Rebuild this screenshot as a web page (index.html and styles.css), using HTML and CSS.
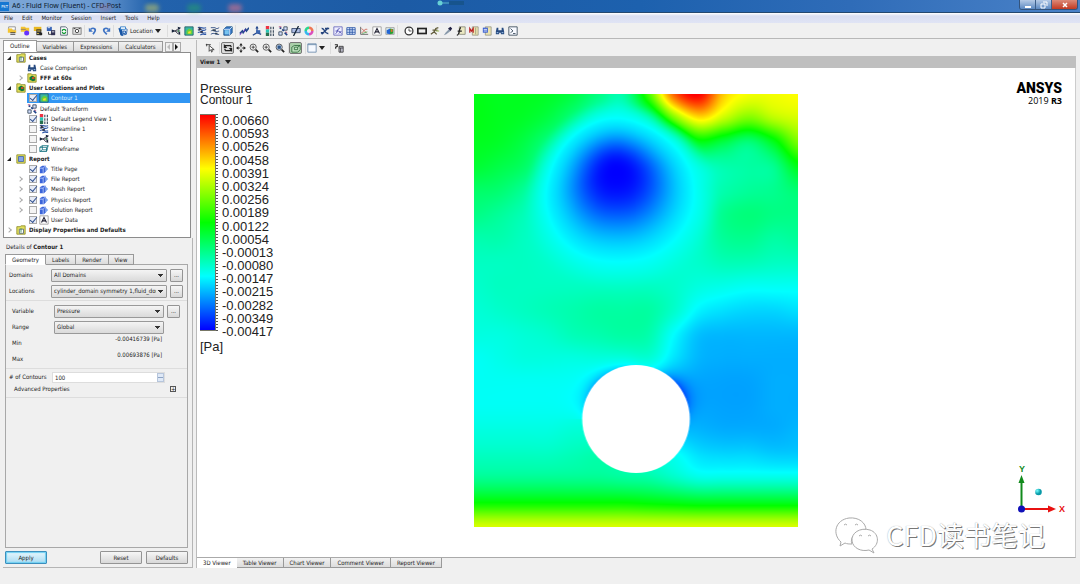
FILE: index.html
```html
<!DOCTYPE html>
<html lang="en">
<head>
<meta charset="utf-8">
<title>A6 : Fluid Flow (Fluent) - CFD-Post</title>
<link rel="stylesheet" href="styles.css">
</head>
<body>
<svg class="defs" aria-hidden="true">
  <defs>
    <symbol id="load" viewBox="0 0 12 12"><path d="M2 1h8v4H2z" fill="#fff" stroke="#888"/><path d="M1 3h5l1 2h4v3H1z" fill="#f4c430"/><path d="M4 8h6M4 10h6" stroke="#333"/></symbol>
    <symbol id="loadr" viewBox="0 0 12 12"><path d="M1 1h5l1 1h4v5H1z" fill="#f4c430"/><path d="M1 4h6" stroke="#876"/><circle cx="8" cy="8.500" r="3" fill="#63f"/></symbol>
    <symbol id="save" viewBox="0 0 12 12"><path d="M1 1h9v5H1z" fill="#e9b820"/><path d="M4 4h6v7H4z" fill="#333"/><path d="M5 6h4M5 9h2" stroke="#fd5"/><path d="M8 8h3v3H8z" fill="#222"/></symbol>
    <symbol id="savep" viewBox="0 0 12 12"><path d="M1 1h6v5H1z" fill="#3763b5"/><path d="M2 2h3" stroke="#fff"/><path d="M6 5h5v6H6z" fill="#335"/><path d="M3 7v3h3" stroke="#333" fill="none"/><path d="M7 7h3" stroke="#fff"/></symbol>
    <symbol id="refresh" viewBox="0 0 12 12"><path d="M2 1h6l2 2v8H2z" fill="#fff" stroke="#456"/><path d="M4 6a2 2 0 0 1 4 0M8 7a2 2 0 0 1-4 0" stroke="#193" stroke-width="1.500" fill="none"/></symbol>
    <symbol id="camera" viewBox="0 0 12 12"><path d="M1 2h10v8H1z" fill="#ddd" stroke="#777"/><circle cx="6" cy="6" r="2" fill="#fff" stroke="#333"/><path d="M2 3h2M8 3h2" stroke="#333"/></symbol>
    <symbol id="undo" viewBox="0 0 12 12"><path d="M3 4c4-3 7 0 5 3L6 10" fill="none" stroke="#3f73c4" stroke-width="2"/><path d="M1 2v5h5z" fill="#3f73c4"/></symbol>
    <symbol id="redo" viewBox="0 0 12 12"><path d="M9 4C5 1 2 4 4 7l3 3" fill="none" stroke="#3f73c4" stroke-width="2"/><path d="M11 2v5H6z" fill="#3f73c4"/></symbol>
    <symbol id="location" viewBox="0 0 12 12"><path d="M1 3l3 8 6-1 1-6-4-2z" fill="#fff" stroke="#1856a5"/><path d="M1 3l2 8 3 1-1-8z" fill="#1856a5"/><path d="M3 1h6v3H3z" fill="#fff" stroke="#2878c8"/><path d="M6 6h3v3H6z" fill="#bcd8f4" stroke="#1856a5"/></symbol>
    <symbol id="vector" viewBox="0 0 12 12"><path d="M1 6h4l4-3M5 6l4 4M5 6h6" stroke="#223" fill="none"/><path d="M1 4v4l4-2zM8 1l4 1-3 3zM8 8l3 3 0-4z" fill="#17233a"/><circle cx="9" cy="6" r="1" fill="#284"/></symbol>
    <symbol id="contour" viewBox="0 0 12 12"><path d="M1 1h10v10H1z" fill="#38b5a4" stroke="#235b65"/><path d="M3 10V6l3-3 4 2v5z" fill="#67d03b"/><path d="M5 9V7l3-1v3z" fill="#f7dc35"/></symbol>
    <symbol id="stream" viewBox="0 0 12 12"><path d="M1 2c3-2 4 2 10 0M1 5c4-3 5 3 10-1M1 8c4-3 6 2 10 0M4 11c3-3 4 0 7-1" stroke="#315aa8" stroke-width="1.300" fill="none"/><path d="M2 1l4 3-4 2zM4 6h3v2H4z" fill="#334"/></symbol>
    <symbol id="particle" viewBox="0 0 12 12"><path d="M1 2h5c2 2 3 1 5 0M1 6c3-2 4 2 10 0M1 10c4-3 6 1 10 0" stroke="#24437c" fill="none"/><path d="M3 4h4v2H3zM6 8h3v2H6z" fill="#345"/></symbol>
    <symbol id="cube" viewBox="0 0 12 12"><path d="M1 4l3-3h7v7l-3 3H1z" fill="#3a78c9" stroke="#175083"/><path d="M1 4h7v7M8 4l3-3" fill="none" stroke="#dcf0ff"/><path d="M2 5h5v5H2z" fill="#78c4ef"/></symbol>
    <symbol id="chart1" viewBox="0 0 12 12"><path d="M1 9l3-3 1 2 3-4 1 2 3-4" stroke="#24478c" stroke-width="2" fill="none"/><path d="M1 11l2-3M6 7l1-3" stroke="#73c"/></symbol>
    <symbol id="chart2" viewBox="0 0 12 12"><path d="M6 1v7L1 11M6 8l5 2" stroke="#24478c" stroke-width="1.500" fill="none"/><path d="M5 5h5v4H5z" fill="#3a66b0"/><path d="M6 0l2 3H4z" fill="#24478c"/></symbol>
    <symbol id="legend" viewBox="0 0 12 12"><path d="M1 0h4v4H1z" fill="#e34"/><path d="M1 4h4v4H1z" fill="#26c6b5"/><path d="M1 8h4v4H1z" fill="#287050"/><path d="M7 1v3M7 5v3M7 9v3M10 1v3M10 5v3M10 9v3" stroke="#345" stroke-width="1.300"/></symbol>
    <symbol id="transform" viewBox="0 0 12 12"><path d="M1 7h4v4H1zM7 1h4v4H7z" fill="#d4e0ff" stroke="#345"/><path d="M2 2l2 1M5 4l2 2M8 8l3 3" stroke="#248" stroke-width="2"/><path d="M1 1h3M9 7l2 1" stroke="#a36"/></symbol>
    <symbol id="clip" viewBox="0 0 12 12"><path d="M1 3h10v5H1z" fill="#aebde4" stroke="#346"/><path d="M9 0L3 12" stroke="#123" stroke-width="1.500"/></symbol>
    <symbol id="wheel" viewBox="0 0 12 12"><g fill="none" stroke-width="3"><path d="M6 2a4 4 0 0 1 4 4" stroke="#e75"/><path d="M10 6a4 4 0 0 1-4 4" stroke="#db4fbd"/><path d="M6 10a4 4 0 0 1-4-4" stroke="#37b6ef"/><path d="M2 6a4 4 0 0 1 4-4" stroke="#2bd68f"/></g></symbol>
    <symbol id="var" viewBox="0 0 12 12"><path d="M2 3c4-1 3 7 8 6M10 2L2 10M6 3h5M1 8h4" stroke="#24437c" stroke-width="1.700" fill="none"/></symbol>
    <symbol id="expr" viewBox="0 0 12 12"><path d="M1 1h10v10H1z" fill="#eef" stroke="#66b"/><path d="M3 9c3 0 1-6 5-6M3 6h4M7 6l3 3M10 6L7 9" stroke="#44a" fill="none"/></symbol>
    <symbol id="table" viewBox="0 0 12 12"><path d="M1 2h10v8H1zM1 4.500h10M1 7.500h10M4.500 2v8M7.500 2v8" fill="#dceaff" stroke="#2953a5"/></symbol>
    <symbol id="chart" viewBox="0 0 12 12"><path d="M2 1v9h9" stroke="#555" fill="none"/><path d="M3 3l6 5M3 8c3 0 2-5 7-4" stroke="#c65" fill="none"/><path d="M4 9l6-2" stroke="#5a5"/></symbol>
    <symbol id="text" viewBox="0 0 12 12"><path d="M1 1h10v10H1z" fill="#fff" stroke="#999"/><path d="M3 9l3-6 3 6M4 7h4" stroke="#223" fill="none" stroke-width="1.300"/></symbol>
    <symbol id="figure" viewBox="0 0 12 12"><path d="M1 2h10v8H1z" fill="#dee" stroke="#999"/><path d="M2 5l4-2v7L2 9z" fill="#2365d4"/><path d="M6 3l4 1v5L6 10z" fill="#2ba032"/><path d="M7 4h2v3H7z" fill="#e63"/></symbol>
    <symbol id="clock" viewBox="0 0 12 12"><circle cx="6" cy="6" r="4.700" fill="#fff" stroke="#333" stroke-width="1.500"/><path d="M6 3v3h3" fill="none" stroke="#333"/></symbol>
    <symbol id="film" viewBox="0 0 12 12"><path d="M0 2h12v8H0z" fill="#222"/><path d="M2 4h8v4H2z" fill="#eee"/></symbol>
    <symbol id="runner" viewBox="0 0 12 12"><path d="M1 10l4-3 2-4 3-1M5 7l3 3M3 5h6" stroke="#5f5a38" stroke-width="1.500" fill="none"/><path d="M7 6h4" stroke="#8a3"/></symbol>
    <symbol id="probe" viewBox="0 0 12 12"><path d="M1 11l2-3 4-4 2 2-5 4z" fill="#89a"/><path d="M6 3l3 3 2-3-2-2z" fill="#224"/></symbol>
    <symbol id="func" viewBox="0 0 12 12"><path d="M4 1h7v9H4z" fill="#ece9c2" stroke="#887"/><path d="M1 11c4 0 2-9 5-9M2 6h5" stroke="#222" fill="none" stroke-width="1.500"/></symbol>
    <symbol id="macro" viewBox="0 0 12 12"><path d="M4 1h7v10H4z" fill="#ece4b0" stroke="#998"/><path d="M1 8V3l2 3 2-3v5" stroke="#b22" stroke-width="1.500" fill="none"/><path d="M8 2v8" stroke="#997"/></symbol>
    <symbol id="turbo" viewBox="0 0 12 12"><path d="M4 1h7v10H4z" fill="#ece4b0" stroke="#998"/><path d="M1 2h6v6H1z" fill="#345bd0"/><path d="M2 4h4M2 6h4" stroke="#fff"/></symbol>
    <symbol id="binoc" viewBox="0 0 12 12"><path d="M2 2h2v3h4V2h2l1 5v3H7V8H5v2H1V7z" fill="#274b80"/><path d="M2 8h2M8 8h2" stroke="#bcdcff"/></symbol>
    <symbol id="cmd" viewBox="0 0 12 12"><path d="M1 1h10v10H1z" fill="#f8faff" stroke="#345"/><path d="M3 3l3 3-3 2M6 9h3" fill="none" stroke="#345"/></symbol>
    <symbol id="select" viewBox="0 0 12 12"><path d="M1 2h6M2 1v3" stroke="#333"/><path d="M5 3v7l2-2 1 3 1-1-1-2h3z" fill="#fff" stroke="#333"/></symbol>
    <symbol id="rotate" viewBox="0 0 12 12"><path d="M2 3h7l1 2M10 9H3L2 7" fill="none" stroke="#222" stroke-width="1.500"/><path d="M1 1v5h4zM11 11V6H7z" fill="#222"/></symbol>
    <symbol id="move" viewBox="0 0 12 12"><path d="M6 2v8M2 6h8" stroke="#333" stroke-dasharray="3 2"/><path d="M6 0l2 3H4zM6 12l2-3H4zM0 6l3-2v4zM12 6L9 4v4z" fill="#222"/></symbol>
    <symbol id="zoom" viewBox="0 0 12 12"><circle cx="5" cy="5" r="3.700" fill="#f6f6f6" stroke="#444"/><path d="M8 8l3 3" stroke="#222" stroke-width="2"/><path d="M5 3v4M3 5h4" stroke="#333"/></symbol>
    <symbol id="zoomfit" viewBox="0 0 12 12"><circle cx="5" cy="5" r="3.700" fill="#cfe0f6" stroke="#444"/><path d="M8 8l3 3" stroke="#222" stroke-width="2"/><path d="M3 3h4v4H3z" fill="#2e5688"/></symbol>
    <symbol id="highlight" viewBox="0 0 12 12"><path d="M1 5l3-2h7v5l-3 3H1z" fill="#bfe2bf" stroke="#2d6a38"/><path d="M4 5h4v3H4zM8 5l3-2" stroke="#2d6a38" fill="none"/></symbol>
    <symbol id="pane" viewBox="0 0 12 12"><path d="M1 1h10v10H1z" fill="#f5f9ff" stroke="#68a"/><path d="M1 2h10" stroke="#68a"/></symbol>
    <symbol id="help" viewBox="0 0 12 12"><path d="M1 2h3v2L2 5v2" stroke="#222" fill="none" stroke-width="1.300"/><path d="M6 4h5v7H6z" fill="#ccd" stroke="#333"/><path d="M6 6h5M8 6v5" stroke="#333"/></symbol>
    <symbol id="folder" viewBox="0 0 12 12"><path d="M1 2h4l1-1h5v10H1z" fill="#e3e05c" stroke="#8d8c27"/><path d="M4 5h5v5H4z" fill="#fff" stroke="#567"/><path d="M6 4v5" stroke="#385"/></symbol>
    <symbol id="foldplot" viewBox="0 0 12 12"><path d="M1 1h4l1 1h5v9H1z" fill="#e3e05c" stroke="#8d8c27"/><path d="M3 5l3-2 4 2v4l-3 1-4-2z" fill="#13763b"/><path d="M6 5h3v2H6z" fill="#e64820"/></symbol>
    <symbol id="foldrep" viewBox="0 0 12 12"><path d="M1 1h10v10H1z" fill="#e3e05c" stroke="#8d8c27"/><path d="M3 3h6v6H3z" fill="#86a4e8" stroke="#456aa8"/></symbol>
    <symbol id="page" viewBox="0 0 12 12"><path d="M1 4l3-2h4v7l-2 2H1z" fill="#3c65d8"/><path d="M1 5h4v6M5 5l3-3" stroke="#b9ceff" fill="none"/><path d="M8 3l3 3-3 3z" fill="#79a3ed"/></symbol>
    <symbol id="wire" viewBox="0 0 12 12"><path d="M1 4l3-2h7l-2 7H1zM1 4h8l2-2M9 4v5M4 2v5h6M4 7L1 9" fill="none" stroke="#167482"/></symbol>
  </defs>
</svg>

<header class="titlebar">
  <span class="app-badge">PST</span>
  <h1 class="app-title">A6 : Fluid Flow (Fluent) - CFD-Post</h1>
  <span class="glow glow-red"></span><span class="glow glow-yellow"></span><span class="glow glow-green"></span><span class="glow glow-pink"></span>
  <svg class="recorder" viewBox="0 0 28 6"><path d="M3 3h10" stroke="#5ab6ca" stroke-width="1"/><circle cx="3" cy="3" r="2.500" fill="#67d0d5"/><path d="M12 1h15v4H12z" fill="#17548d"/></svg>
  <div class="window-buttons">
    <button class="win" aria-label="Minimize"><svg viewBox="0 0 10 8"><path d="M2 5h6v2H2z" fill="#fff"/></svg></button>
    <button class="win" aria-label="Restore"><svg viewBox="0 0 10 8"><path d="M4 1h4v4M2 3h4v4H2z" fill="none" stroke="#fff"/></svg></button>
    <button class="win close" aria-label="Close"><svg viewBox="0 0 10 8"><path d="M3 2l4 4M7 2L3 6" stroke="#fff" stroke-width="1.500"/></svg></button>
  </div>
</header>

<nav class="menubar">
  <button>File</button><button>Edit</button><button>Monitor</button><button>Session</button><button>Insert</button><button>Tools</button><button>Help</button>
</nav>

<div class="toolbar main-tools">
  <div class="group">
    <button aria-label="Load results"><svg><use href="#load"/></svg></button><button aria-label="Load state"><svg><use href="#loadr"/></svg></button><button aria-label="Save state"><svg><use href="#save"/></svg></button><button aria-label="Save project"><svg><use href="#savep"/></svg></button><button aria-label="Refresh"><svg><use href="#refresh"/></svg></button><button aria-label="Save picture"><svg><use href="#camera"/></svg></button>
  </div>
  <div class="group">
    <button aria-label="Undo"><svg><use href="#undo"/></svg></button><button aria-label="Redo"><svg><use href="#redo"/></svg></button>
  </div>
  <div class="group wide">
    <button class="labelled"><svg><use href="#location"/></svg>Location<span class="caret"></span></button>
  </div>
  <div class="group">
    <button aria-label="Vector"><svg><use href="#vector"/></svg></button><button aria-label="Contour"><svg><use href="#contour"/></svg></button><button aria-label="Streamline"><svg><use href="#stream"/></svg></button><button aria-label="Particle track"><svg><use href="#particle"/></svg></button><button aria-label="Volume rendering"><svg><use href="#cube"/></svg></button>
  </div>
  <div class="group">
    <button aria-label="Text"><svg><use href="#chart1"/></svg></button><button aria-label="Coordinate frame"><svg><use href="#chart2"/></svg></button><button aria-label="Legend"><svg><use href="#legend"/></svg></button><button aria-label="Instance transform"><svg><use href="#transform"/></svg></button><button aria-label="Clip plane"><svg><use href="#clip"/></svg></button><button aria-label="Color map"><svg><use href="#wheel"/></svg></button>
  </div>
  <div class="group">
    <button aria-label="Variable"><svg><use href="#var"/></svg></button><button aria-label="Expression"><svg><use href="#expr"/></svg></button><button aria-label="Table"><svg><use href="#table"/></svg></button><button aria-label="Chart"><svg><use href="#chart"/></svg></button><button aria-label="Comment"><svg><use href="#text"/></svg></button><button aria-label="Figure"><svg><use href="#figure"/></svg></button>
  </div>
  <div class="group wide">
    <button aria-label="Timestep selector"><svg><use href="#clock"/></svg></button><button aria-label="Animation"><svg><use href="#film"/></svg></button><button aria-label="Quick editor"><svg><use href="#runner"/></svg></button><button aria-label="Probe"><svg><use href="#probe"/></svg></button><button aria-label="Function calculator"><svg><use href="#func"/></svg></button><button aria-label="Macro calculator"><svg><use href="#macro"/></svg></button><button aria-label="Mesh calculator"><svg><use href="#turbo"/></svg></button><button aria-label="Case comparison"><svg><use href="#binoc"/></svg></button><button aria-label="Command editor"><svg><use href="#cmd"/></svg></button>
  </div>
</div>

<main class="workspace">
  <aside class="side">
    <div class="tabs outline-tabs">
      <button class="tab on">Outline</button><button class="tab">Variables</button><button class="tab">Expressions</button><button class="tab">Calculators</button>
      <div class="scrollers"><button aria-label="Previous tabs"><span class="left"></span></button><button aria-label="Next tabs"><span class="right"></span></button></div>
    </div>
    <ul class="tree">
      <li class="root"><span class="open"></span><svg><use href="#folder"/></svg>Cases</li>
      <li class="leaf"><svg><use href="#binoc"/></svg>Case Comparison</li>
      <li class="leaf strong"><span class="shut"></span><svg><use href="#foldplot"/></svg>FFF at 60s</li>
      <li class="root"><span class="open"></span><svg><use href="#foldplot"/></svg>User Locations and Plots</li>
      <li class="leaf selected"><label><input type="checkbox" checked><svg><use href="#contour"/></svg>Contour 1</label></li>
      <li class="leaf"><svg><use href="#transform"/></svg>Default Transform</li>
      <li class="leaf"><label><input type="checkbox" checked><svg><use href="#legend"/></svg>Default Legend View 1</label></li>
      <li class="leaf"><label><input type="checkbox"><svg><use href="#stream"/></svg>Streamline 1</label></li>
      <li class="leaf"><label><input type="checkbox"><svg><use href="#vector"/></svg>Vector 1</label></li>
      <li class="leaf"><label><input type="checkbox"><svg><use href="#wire"/></svg>Wireframe</label></li>
      <li class="root"><span class="open"></span><svg><use href="#foldrep"/></svg>Report</li>
      <li class="leaf"><label><input type="checkbox" checked><svg><use href="#page"/></svg>Title Page</label></li>
      <li class="leaf"><span class="shut"></span><label><input type="checkbox" checked><svg><use href="#page"/></svg>File Report</label></li>
      <li class="leaf"><span class="shut"></span><label><input type="checkbox" checked><svg><use href="#page"/></svg>Mesh Report</label></li>
      <li class="leaf"><span class="shut"></span><label><input type="checkbox" checked><svg><use href="#page"/></svg>Physics Report</label></li>
      <li class="leaf"><span class="shut"></span><label><input type="checkbox"><svg><use href="#page"/></svg>Solution Report</label></li>
      <li class="leaf"><label><input type="checkbox" checked><svg><use href="#text"/></svg>User Data</label></li>
      <li class="root"><span class="shut"></span><svg><use href="#folder"/></svg>Display Properties and Defaults</li>
    </ul>

    <section class="details">
      <h2 class="details-title">Details of <b>Contour 1</b></h2>
      <div class="tabs detail-tabs">
        <button class="tab on">Geometry</button><button class="tab">Labels</button><button class="tab">Render</button><button class="tab">View</button>
      </div>
      <form class="panel">
        <div class="block">
          <div class="row"><label for="domains">Domains</label><select id="domains"><option>All Domains</option></select><button type="button">...</button></div>
          <div class="row"><label for="locations">Locations</label><select id="locations"><option>cylinder_domain symmetry 1,fluid_domain symmetry 1</option></select><button type="button">...</button></div>
        </div>
        <div class="block inset">
          <div class="row"><label for="variable">Variable</label><select id="variable"><option>Pressure</option></select><button type="button">...</button></div>
          <div class="row"><label for="range">Range</label><select id="range"><option>Global</option></select></div>
          <div class="row limits"><span>Min</span><output>-0.00416739 [Pa]</output></div>
          <div class="row limits"><span>Max</span><output>0.00693876 [Pa]</output></div>
        </div>
        <div class="block last">
          <div class="row count"><label for="contours"># of Contours</label><div class="spin"><input id="contours" type="text" value="100"><span class="arrows"></span></div></div>
          <div class="advanced"><span>Advanced Properties</span><button type="button" aria-label="Expand advanced properties">+</button></div>
        </div>
      </form>
      <div class="actions"><button class="apply">Apply</button><button>Reset</button><button>Defaults</button></div>
    </section>
  </aside>

  <section class="view">
    <div class="toolbar view-tools">
      <div class="group"><button aria-label="Select"><svg><use href="#select"/></svg></button></div>
      <div class="group">
        <button class="pressed" aria-label="Rotate"><svg><use href="#rotate"/></svg></button><button aria-label="Pan"><svg><use href="#move"/></svg></button><button aria-label="Zoom"><svg><use href="#zoom"/></svg></button><button aria-label="Zoom box"><svg><use href="#zoom"/></svg></button><button aria-label="Fit view"><svg><use href="#zoomfit"/></svg></button>
      </div>
      <div class="group near"><button class="pressed green" aria-label="Highlight"><svg><use href="#highlight"/></svg></button></div>
      <div class="group"><button class="drop" aria-label="Viewport layout"><svg><use href="#pane"/></svg><span class="caret"></span></button></div>
      <div class="group"><button aria-label="Help"><svg><use href="#help"/></svg></button></div>
    </div>
    <button class="view-name">View 1<span class="caret"></span></button>
    <div class="canvas-area">
      <div class="legend">
        <p class="legend-title">Pressure</p>
        <p class="legend-sub">Contour 1</p>
        <div class="scale">
          <div class="ramp"></div>
          <div class="ticks"></div>
          <ol class="values">
            <li>0.00660</li><li>0.00593</li><li>0.00526</li><li>0.00458</li><li>0.00391</li><li>0.00324</li><li>0.00256</li><li>0.00189</li><li>0.00122</li><li>0.00054</li><li>-0.00013</li><li>-0.00080</li><li>-0.00147</li><li>-0.00215</li><li>-0.00282</li><li>-0.00349</li><li>-0.00417</li>
          </ol>
        </div>
        <p class="unit">[Pa]</p>
      </div>
      <canvas id="field" class="field" width="325" height="433" aria-label="Pressure contour"></canvas>
      <div class="marks">
        <div class="brand"><strong>ANSYS</strong><span>2019 <b>R3</b></span></div>
        <svg class="triad" viewBox="0 0 50 56">
          <defs><radialGradient id="ball" cx="30%" cy="30%"><stop offset="0" stop-color="#7ff"/><stop offset="1" stop-color="#089aa8"/></radialGradient></defs>
          <path d="M7.500 46V18" stroke="#118a1c" stroke-width="2"/><path d="M7.500 12l3 8h-6z" fill="#118a1c"/>
          <path d="M8 46h28" stroke="#e81111" stroke-width="2"/><path d="M42 46l-8-3.500v7z" fill="#e81111"/>
          <circle cx="7.500" cy="46" r="3.500" fill="#1010b8"/><circle cx="24.500" cy="29" r="3.300" fill="url(#ball)"/>
          <text x="5" y="9" class="axis-y">Y</text><text x="45" y="49" class="axis-x">X</text>
        </svg>
      </div>
      <div class="watermark">
        <svg viewBox="0 0 44 38"><g fill="#fff" stroke="#aaa" stroke-width="1"><path d="M6 26C-3 18 0 4 14 2c10-1 17 5 17 12-9 0-17 7-14 14-3 0-5 0-7-1l-5 3z"/><path d="M37 33c8-5 7-16-2-19-10-3-19 3-18 11 1 7 9 11 17 9l5 3z"/><path d="M9 9a2 2 0 0 1 3 0M20 9a2 2 0 0 1 3 0M24 20a2 2 0 0 1 3 0M33 20a2 2 0 0 1 3 0" fill="none"/></g></svg>
        <span>CFD读书笔记</span>
      </div>
    </div>
    <div class="tabs viewer-tabs">
      <button class="tab on">3D Viewer</button><button class="tab">Table Viewer</button><button class="tab">Chart Viewer</button><button class="tab">Comment Viewer</button><button class="tab">Report Viewer</button>
    </div>
  </section>
</main>
<script src="field.js"></script>
</body>
</html>
```
FILE: styles.css
```css
* { box-sizing: border-box; }

body {
  margin: 0;
  min-height: 100vh;
  display: flex;
  flex-direction: column;
  background: #f0f0f0;
  color: #222;
  font: 6px/8px "DejaVu Sans Condensed", "DejaVu Sans", sans-serif;
}

button, input, select { font: inherit; color: inherit; margin: 0; }
button { padding: 0; border: 0; background: none; white-space: nowrap; }
h1, h2, p, ul, ol { margin: 0; padding: 0; font: inherit; }
ul, ol { list-style: none; }
.defs { position: absolute; width: 0; height: 0; }

.titlebar {
  position: relative;
  display: flex;
  align-items: center;
  height: 13px;
  background: linear-gradient(90deg, #7ea8d8 0, #6898d0 100px, #2262ac 150px, #1c5ba5 400px, #1d61ae 640px, #2f6cb8 850px, #4a82c8 100%);
  border-bottom: 1px solid #24486f;
}
.app-badge { width: 9px; height: 9px; background: #1677d2; color: #fff; font-size: 4px; line-height: 9px; text-align: center; }
.app-title { margin-left: 3px; font: 7px/10px "Noto Sans", sans-serif; color: #0c1a2d; }
.glow { position: absolute; top: 4px; width: 14px; height: 8px; border-radius: 4px; filter: blur(2px); opacity: .6; }
.glow-red { left: 98px; background: #a66a86; opacity: .3; }
.glow-yellow { left: 145px; background: #b7bf6c; }
.glow-green { left: 187px; background: #269a72; }
.glow-pink { left: 228px; background: #d9738b; }
.recorder { position: absolute; left: 437px; top: 0; width: 28px; height: 6px; }
.window-buttons { display: flex; align-self: flex-start; margin-left: auto; margin-right: 2px; border: 1px solid #33547d; border-top: 0; border-radius: 0 0 3px 3px; overflow: hidden; }
.win { width: 16px; height: 9px; display: grid; place-items: center; background: linear-gradient(#b5cae6, #5c89c2); border-right: 1px solid #3d5f8a; }
.win svg { width: 10px; height: 8px; }
.win.close { width: 25px; border: 0; background: linear-gradient(#dc8a78, #c23a22); }

.menubar { display: flex; gap: 9px; height: 10px; padding-left: 4px; background: linear-gradient(#fff 0, #d9def1 3px, #e0e4f5); }
.menubar button { line-height: 10px; }

.toolbar { display: flex; align-items: center; background: #f0f0f0; }
.toolbar .group { display: flex; align-items: center; }
.toolbar .group + .group { margin-left: 1px; padding-left: 1px; border-left: 1px solid #ddd; }
.toolbar .group.wide.wide { padding-left: 4px; }
.toolbar button { width: 13px; height: 12px; display: grid; place-items: center; }
.toolbar svg { width: 10px; height: 10px; }
.toolbar .labelled { width: 48px; display: flex; gap: 2px; align-items: center; }
.caret { display: inline-block; border: 3px solid transparent; border-top: 4px solid #222; border-bottom: 0; }
.main-tools { height: 16px; padding-left: 5px; border-bottom: 1px solid #b8b8b8; }

.workspace { flex: 1; display: grid; grid-template-columns: 193px minmax(0, 1fr); gap: 3px; padding: 1px 4px 16px 0; }
.side { display: flex; flex-direction: column; padding-left: 3px; }

.tabs { display: flex; align-items: flex-end; }
.tab { height: 10px; padding: 0 5px; border: 1px solid #999; border-left-width: 0; background: linear-gradient(#f2f2f2, #dcdcdc); line-height: 8px; }
.tab.on { background: #fff; border-left-width: 1px; border-bottom-color: #fff; }
.outline-tabs { height: 12px; }
.outline-tabs .tab { height: 11px; padding: 0 6px; }
.outline-tabs .tab.on { height: 12px; }
.scrollers { display: flex; margin-left: 2px; }
.scrollers button { width: 8px; height: 10px; display: grid; place-items: center; border: 1px solid #aaa; }
.left, .right { border: 3px solid transparent; }
.left { border-right-color: #bbb; border-left: 0; }
.right { border-left-color: #111; border-right: 0; }

.tree { display: flex; flex-direction: column; justify-content: space-between; height: 186px; margin-right: 2px; padding: 0 0 2px; border: 1px solid #8c8c8c; background: #fff; }
.tree li { position: relative; display: flex; align-items: center; gap: 3px; height: 10px; white-space: nowrap; }
.tree li svg { width: 10px; height: 10px; }
.root { padding-left: 12px; font-weight: bold; }
.leaf { margin-left: 23px; }
.strong { font-weight: bold; }
.leaf label { display: flex; align-items: center; gap: 2px; padding-left: 2px; }
.selected { background: #3196f3; color: #d8f0ff; }
.open, .shut { position: absolute; left: 3px; }
.leaf .shut { left: -9px; }
.open { border: 2px solid transparent; border-right-color: #222; border-bottom-color: #222; }
.shut { width: 4px; height: 4px; border: 1px solid #aaa; transform: rotate(45deg); border-bottom: 0; border-left: 0; }
.tree input { appearance: none; width: 8px; height: 8px; border: 1px solid #aaa; background: #f4f4f4; }
.tree input:checked { background: #e6ebf6; }
.tree input:checked::after { content: ""; display: block; width: 6px; height: 3px; border: solid #33528f; border-width: 0 0 1px 1px; transform: rotate(-50deg); }

.details { flex: 1; display: flex; flex-direction: column; padding: 4px 4px 3px 2px; border: solid #b5b5b5; border-width: 0 1px 1px 0; }
.details-title { height: 12px; padding-left: 1px; line-height: 10px; }
.panel { flex: 1; padding-top: 2px; border: 1px solid #a8a8a8; background: #f0f0f0; }
.detail-tabs { margin-bottom: -1px; position: relative; }
.detail-tabs .tab { height: 11px; padding: 0 6px; }
.block { padding: 0 4px 1px 3px; border-bottom: 1px solid #ddd; }
.block.inset { padding: 2px 7px 1px 6px; }
.row { display: grid; grid-template-columns: 39px minmax(0, 1fr) 13px; column-gap: 3px; align-items: center; height: 16px; }
.row select { height: 13px; width: 100%; padding: 0 10px 0 2px; appearance: none; border: 1px solid #999; border-radius: 1px; text-overflow: clip;
  background: linear-gradient(#333, #333) right 3px top 4px / 5px 1px no-repeat, linear-gradient(#333, #333) right 4px top 5px / 3px 1px no-repeat, linear-gradient(#333, #333) right 5px top 6px / 1px 1px no-repeat, linear-gradient(#f4f4f4, #dadada); }
.row button, .actions button { height: 13px; border: 1px solid #949494; border-radius: 1px; background: linear-gradient(#f6f6f6, #d8d8d8); }
.row.limits { grid-template-columns: 39px 1fr; padding-right: 18px; }
.limits output { text-align: right; align-self: start; line-height: 8px; }
.block.last { padding: 0 3px 4px; }
.row.count { grid-template-columns: 40px 1fr; padding-right: 19px; white-space: nowrap; }
.spin { position: relative; display: flex; }
.spin input { width: 100%; height: 11px; padding: 0 2px; border: 1px solid #ddd; background: #fff; }
.arrows { position: absolute; right: 1px; top: 1px; width: 7px; height: 9px; border: 1px solid #b7c6dc; background: linear-gradient(#dfe9f7 40%, #8da3c3 40% 60%, #dfe9f7 60%); }
.advanced { display: flex; justify-content: space-between; align-items: center; padding: 0 8px 0 5px; }
.advanced button { width: 6px; height: 6px; border: 1px solid #555; line-height: 4px; }
.actions { display: flex; gap: 4px; padding: 3px 0 0; }
.actions button { width: 42px; }
.actions .apply { margin-right: auto; border-color: #3c8fbd; background: linear-gradient(#e6f6fd, #a9dbf2); box-shadow: inset 0 0 1px 1px #6fd0f2; }

.view { display: flex; flex-direction: column; min-width: 0; border-left: 1px solid #bbb; }
.view-tools { height: 16px; padding-left: 6px; }
.view-tools .group + .group { margin-left: 3px; padding-left: 1px; }
.view-tools .group + .near { margin-left: 2px; padding-left: 0; }
.view-tools .pressed { border: 1px solid #777; border-radius: 2px; background: #dcdcdc; }
.view-tools .green { background: #a9cfa9; }
.view-tools .drop { width: 20px; display: flex; align-items: center; gap: 2px; }
.view-name { height: 12px; padding-left: 3px; display: flex; align-items: center; gap: 5px; background: #bfbfbf; font-weight: bold; }
.canvas-area { position: relative; flex: 1; display: grid; grid-template-columns: 1fr 37% 1fr; padding: 26px 0 30px; background: #fff; border-right: 1px solid #ccc; border-bottom: 1px solid #aaa; }
.field { width: 100%; height: 100%; }

.legend { padding: 0 3px; margin-top: -12px; font-family: "Liberation Sans", sans-serif; color: #222; }
.legend-title { font-size: 13px; line-height: 13px; }
.legend-sub { font-size: 12px; line-height: 11px; }
.scale { display: flex; margin-top: 8px; }
.ramp { width: 16px; height: 217px; background: linear-gradient(#f00, #ff0 25%, #0f0 50%, #0ff 75%, #00f); border: 1px solid #776; border-width: 1px 1px 1px 0; }
.ticks { width: 2px; height: 217px; background: repeating-linear-gradient(#555 0 1px, transparent 1px 3px); }
.values { height: 224px; margin-left: 4px; display: flex; flex-direction: column; justify-content: space-between; font-size: 13px; line-height: 13px; }
.unit { margin-top: 2px; font-size: 13px; line-height: 13px; }

.marks { display: flex; flex-direction: column; justify-content: space-between; align-items: flex-end; }
.brand { margin: -13px 13px 0 0; text-align: right; color: #000; font-family: "Open Sans", sans-serif; }
.brand strong { display: block; font: 900 14px/15px Roboto, sans-serif; }
.brand span { display: block; font-size: 9px; line-height: 9px; }
.triad { width: 50px; height: 56px; margin: 0 11px 8px 0; overflow: visible; }
.axis-x, .axis-y { font: bold 9px "Liberation Sans", sans-serif; }
.axis-x { fill: #e81111; }
.axis-y { fill: #118a1c; }
.watermark { position: absolute; right: 30px; bottom: 3px; display: flex; align-items: center; gap: 7px; }
.watermark svg { width: 44px; height: 38px; }
.watermark span { color: #fff; font: 27px/38px "Noto Sans CJK SC", sans-serif; text-shadow: 1px 1px 0 #777, 0 0 1px #999; }

.viewer-tabs { height: 10px; align-items: stretch; }
.viewer-tabs .tab { border-top: 0; padding: 0 6px; }
.viewer-tabs .tab.on { border-color: #fff; padding: 0 5px; }
```
FILE: field.js
```js
// Pressure samples, per cent of the full range, every 25 px across and 24 px down.
const grid = [
  [48,47,47,46,43,37,34,57,90,100,80,74,74,75],
  [48,47,46,43,37,30,28,36,61,77,69,62,68,71],
  [47,46,43,37,31,28,28,28,32,47,43,38,47,62],
  [45,43,40,32,28,28,28,28,28,30,33,34,36,48],
  [40,39,35,29,28,28,28,28,28,29,33,35,36,39],
  [37,35,32,29,28,28,28,28,28,29,36,38,37,37],
  [33,33,31,29,28,28,28,28,28,30,35,36,34,35],
  [31,31,31,30,29,28,28,28,29,30,32,32,31,31],
  [30,31,31,31,31,31,31,31,30,28,27,26,26,26],
  [29,30,31,32,33,34,34,34,30,24,22,21,21,22],
  [28,28,29,30,32,33,34,33,25,19,18,18,18,18],
  [26,27,28,28,28,29,30,30,23,18,17,17,17,17],
  [26,26,26,26,26,26,27,26,20,17,16,16,17,17],
  [26,26,26,26,26,27,27,24,19,17,16,16,17,17],
  [28,28,28,28,29,29,28,25,20,18,17,17,17,18],
  [31,31,31,31,32,33,32,29,26,22,21,21,20,20],
  [36,36,36,36,36,36,35,34,31,28,28,28,28,28],
  [50,50,50,50,50,50,50,49,48,47,47,47,47,47],
  [71,71,71,71,71,71,71,71,71,71,71,71,71,71]
];

const clamp = (v, lo, hi) => Math.max(lo, Math.min(hi, v));
const cubic = (a, b, c, d, t) =>
  b + t * (c - a + t * (2 * a - 5 * b + 4 * c - d + t * (3 * (b - c) + d - a))) / 2;

function sample(x, y) {
  const gx = x / 25, gy = y / 24;
  const ix = Math.floor(gx), iy = Math.floor(gy);
  const at = (r, c) => grid[clamp(r, 0, grid.length - 1)][clamp(c, 0, 13)];
  const row = r => cubic(at(r, ix - 1), at(r, ix), at(r, ix + 1), at(r, ix + 2), gx - ix);
  return cubic(row(iy - 1), row(iy), row(iy + 1), row(iy + 2), gy - iy);
}

// Shed vortex: radius of its rim every 30 degrees, clockwise from the right.
const vortex = { x: 142, y: 77 };
const rim = [73, 84, 89, 88, 87, 78, 65, 57, 53, 52, 53, 60];
function withVortex(x, y, base) {
  const dx = x - vortex.x, dy = y - vortex.y;
  const a = ((Math.atan2(dy, dx) * 180 / Math.PI + 360) % 360) / 30;
  const i = Math.floor(a), at = k => rim[(k + 12) % 12];
  const s = Math.hypot(dx, dy) / cubic(at(i - 1), at(i), at(i + 1), at(i + 2), a - i);
  if (s > 1.4) return base;
  const core = 27 * (1 - Math.exp(-((s / 0.71) ** 2.4)));
  const k = clamp((s - 0.92) / 0.48, 0, 1);
  const w = k * k * (3 - 2 * k);
  return core * (1 - w) + base * w;
}

const body = { x: 162.5, y: 325, r: 54 };
function suction(x, y) {
  const dx = x - body.x, dy = y - body.y;
  const d = Math.max(0, Math.hypot(dx, dy) - body.r);
  const a = Math.atan2(dy, dx) * 180 / Math.PI;
  const bump = (centre, width) => Math.exp(-(((a - centre) / width) ** 2));
  return (11 * bump(-35, 26) + 7 * bump(-120, 42)) * Math.exp(-d / 8) + 4 * bump(-150, 25) * Math.exp(-d / 6);
}

function colour(p) {
  const t = clamp(p, 0, 100) / 25;
  if (t < 1) return [0, 255 * t, 255];
  if (t < 2) return [0, 255, 255 * (2 - t)];
  if (t < 3) return [255 * (t - 2), 255, 0];
  return [255, 255 * (4 - t), 0];
}

const canvas = document.getElementById("field");
const ctx = canvas.getContext("2d");
const image = ctx.createImageData(canvas.width, canvas.height);
for (let y = 0; y < canvas.height; y++) {
  for (let x = 0; x < canvas.width; x++) {
    const rgb = colour(withVortex(x, y, sample(x, y)) - suction(x, y));
    image.data.set([rgb[0], rgb[1], rgb[2], 255], (y * canvas.width + x) * 4);
  }
}
ctx.putImageData(image, 0, 0);
ctx.fillStyle = "#fff";
ctx.beginPath();
ctx.arc(body.x, body.y, body.r, 0, Math.PI * 2);
ctx.fill();
```
